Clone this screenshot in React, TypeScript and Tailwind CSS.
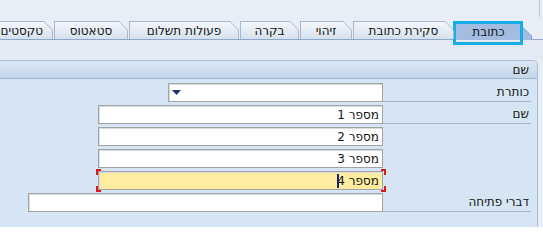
import React from "react";

type TabDef = { label: string; w: number; active?: boolean };

const tabs: TabDef[] = [
  { label: "כתובת", w: 77, active: true },
  { label: "סקירת כתובת", w: 101 },
  { label: "זיהוי", w: 52 },
  { label: "בקרה", w: 59 },
  { label: "פעולות תשלום", w: 110 },
  { label: "סטאטוס", w: 74 },
  { label: "טקסטים", w: 56 },
];

function Tab({ t, last }: { t: TabDef; last?: boolean }) {
  if (t.active) {
    return (
      <div className="relative shrink-0 -mb-px" style={{ width: t.w }}>
        <div className="h-[18px] bg-[#7f9cc6] pt-px pl-px pr-px [clip-path:polygon(0_0,calc(100%_-_14px)_0,100%_14px,100%_100%,0_100%)]">
          <div className="flex h-full items-center bg-[#a3bcdf] pl-[4px] pr-[14px] [clip-path:polygon(0_0,calc(100%_-_13px)_0,100%_13px,100%_100%,0_100%)]">
            <span className="flex-1 pt-[1px] text-center">{t.label}</span>
          </div>
        </div>
        <div className="pointer-events-none absolute -top-px right-[9px] h-[24px] w-[70px] border-[3px] border-[#17ade8]" />
      </div>
    );
  }
  return (
    <div className="shrink-0" style={{ width: t.w }}>
      <div className="h-[18px] bg-[#a7b8ce] pt-px pl-px pr-px [clip-path:polygon(0_0,calc(100%_-_9px)_0,100%_9px,100%_100%,0_100%)]">
        <div
          className={`flex h-full items-center bg-gradient-to-b from-[#f4f7fb] to-[#d6e1ee] ${
            last ? "pl-[1px] pr-[9px]" : "px-[4px]"
          } [clip-path:polygon(0_0,calc(100%_-_8px)_0,100%_8px,100%_100%,0_100%)]`}
        >
          <span className={`flex-1 whitespace-nowrap pt-[1px] ${last ? "text-right" : "text-center"}`}>
            {t.label}
          </span>
        </div>
      </div>
    </div>
  );
}

function Field({
  w,
  text,
  dropdown,
  yellow,
  cursor,
}: {
  w: number;
  text?: string;
  dropdown?: boolean;
  yellow?: boolean;
  cursor?: boolean;
}) {
  return (
    <div
      className={`flex h-[19px] shrink-0 items-center border border-[#a3a3a3] pr-[3px] shadow-[inset_1px_1px_0_#dcdcdc] ${
        yellow ? "bg-[#feeda1]" : "bg-white"
      }`}
      style={{ width: w }}
    >
      {text && <span className="whitespace-nowrap leading-none">{text}</span>}
      {cursor && <span className="-mr-[2px] inline-block h-[14px] w-[2px] bg-[#15236a]" />}
      {dropdown && (
        <svg className="mr-auto ml-[3px]" width="9" height="5" viewBox="0 0 9 5">
          <polygon points="0,0 9,0 4.5,5" fill="#1f3566" />
        </svg>
      )}
    </div>
  );
}

function Row({
  label,
  children,
}: {
  label?: string;
  children: React.ReactNode;
}) {
  return (
    <div className="flex items-start pr-[6px]">
      <div
        className={`flex h-[19px] w-[148px] shrink-0 items-center pr-[2px] ${
          label ? "border-b border-[#aab3be]" : ""
        }`}
      >
        {label && <span className="whitespace-nowrap">{label}</span>}
      </div>
      {children}
    </div>
  );
}

export default function App() {
  return (
    <div
      dir="rtl"
      className="relative flex h-[227px] w-[543px] flex-col overflow-hidden bg-[#e7eef6] font-['DejaVu_Sans',sans-serif] text-[12px] text-[#141414]"
    >
      <div className="flex h-[21px] shrink-0">
        <div className="mr-[3px] h-[17px] w-px bg-[#c2cad6]" />
      </div>
      <div className="flex h-[19px] shrink-0 items-end gap-px border-b border-[#8ea8cb] pr-[11px]">
        {tabs.map((t, i) => (
          <Tab key={t.label} t={t} last={i === tabs.length - 1} />
        ))}
      </div>
      <div className="h-[20px] shrink-0 bg-[#e3eaf4]" />
      <div className="mr-[5px] flex flex-1 flex-col overflow-hidden rounded-tr-[5px] border-t border-r border-[#a9bdd6]">
        <div className="flex h-[18px] shrink-0 items-center border-b border-[#9fb5d2] bg-gradient-to-b from-[#dce7f3] to-[#c4d6eb] pr-[8px]">
          <span>שם</span>
        </div>
        <div className="flex flex-1 flex-col gap-[3px] bg-[#d5e5f3] pt-[4px]">
          <Row label="כותרת">
            <Field w={215} dropdown />
          </Row>
          <Row label="שם">
            <Field w={285} text="מספר 1" />
          </Row>
          <Row>
            <Field w={285} text="מספר 2" />
          </Row>
          <Row>
            <Field w={285} text="מספר 3" />
          </Row>
          <Row>
            <div className="relative shrink-0">
              <Field w={285} text="מספר 4" yellow cursor />
              <span className="absolute -top-[2px] -left-[2px] h-[6px] w-[5px] border-t-2 border-l-2 border-[#e01818]" />
              <span className="absolute -bottom-[2px] -left-[2px] h-[6px] w-[5px] border-b-2 border-l-2 border-[#e01818]" />
              <span className="absolute -top-[2px] -right-[3px] h-[6px] w-[5px] border-t-2 border-r-2 border-[#e01818]" />
              <span className="absolute -bottom-[2px] -right-[3px] h-[6px] w-[5px] border-b-2 border-r-2 border-[#e01818]" />
            </div>
          </Row>
          <Row label="דברי פתיחה">
            <Field w={355} />
          </Row>
        </div>
      </div>
    </div>
  );
}
